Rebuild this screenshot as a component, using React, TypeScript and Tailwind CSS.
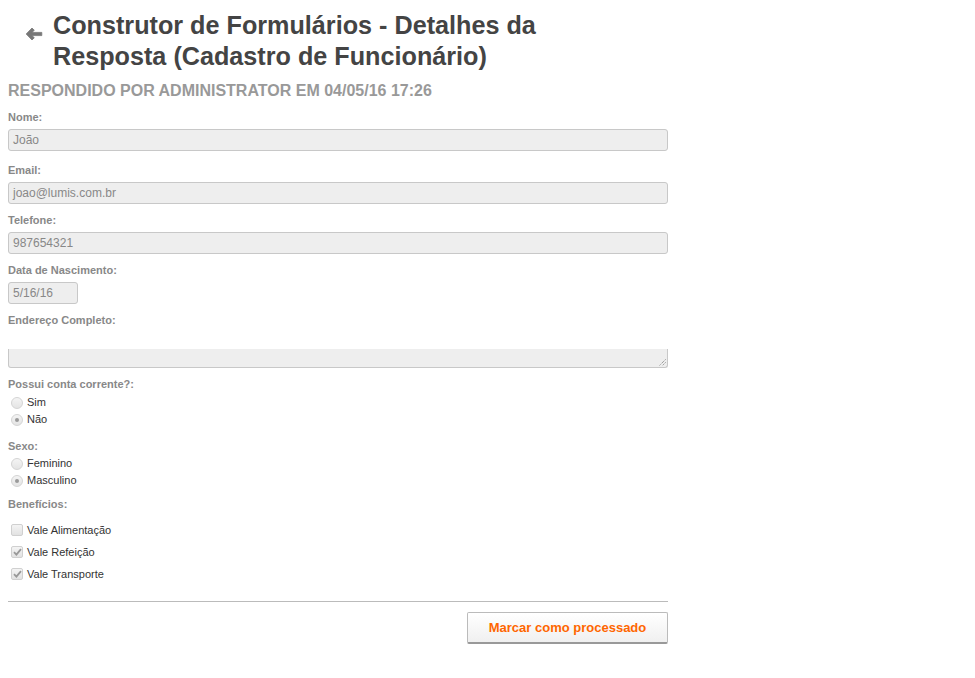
const font = { fontFamily: '"Liberation Sans", Arial, sans-serif' };

const Field = ({ label, value, className, inputClass }: { label: string; value: string; className: string; inputClass?: string }) => (
  <div className={className}>
    <div className="text-[11px] leading-[14px] font-bold text-[#888]">{label}</div>
    <div
      className={`mt-[5px] h-[22px] rounded-[3px] border border-[#c8c8c8] bg-[#eeeeee] pl-1 text-[12px] leading-[20px] text-[#888] ${inputClass ?? "w-full"}`}
    >
      {value}
    </div>
  </div>
);

const Radio = ({ label, checked }: { label: string; checked?: boolean }) => (
  <div className="flex h-[17px] items-center pl-[3px]">
    <span className="flex h-[12px] w-[12px] items-center justify-center rounded-full border border-[#d4d4d4] bg-gradient-to-b from-[#f4f4f4] to-[#e4e4e4]">
      {checked && <span className="h-[4px] w-[4px] rounded-full bg-[#9a9a9a]" />}
    </span>
    <span className="ml-[4px] text-[11px] text-[#333]">{label}</span>
  </div>
);

const Check = ({ label, checked }: { label: string; checked?: boolean }) => (
  <div className="flex h-[22px] items-center pl-[3px]">
    <span className="flex h-[12px] w-[12px] items-center justify-center rounded-[2px] border border-[#d0d0d0] bg-gradient-to-b from-[#f4f4f4] to-[#e2e2e2]">
      {checked && (
        <svg width="9" height="8" viewBox="0 0 9 8">
          <path d="M1 4.2 L3.4 6.6 L8 1.2" fill="none" stroke="#999" strokeWidth="1.8" />
        </svg>
      )}
    </span>
    <span className="ml-[4px] text-[11px] text-[#333]">{label}</span>
  </div>
);

export default function App() {
  return (
    <div className="min-h-[678px] w-[975px] bg-white" style={font}>
      {/* Header */}
      <div className="flex pt-[10px]">
        <div className="w-[53px] pl-[25px] pt-[17px]">
          <svg width="18" height="14" viewBox="0 0 18 14">
            <path
              d="M7 1 L1.2 7 L7 13 L9.3 10.7 L7 8.6 H16.8 V5.4 H7 L9.3 3.3 Z"
              fill="#777"
              stroke="#777"
              strokeWidth="0.8"
              strokeLinejoin="round"
            />
          </svg>
        </div>
        <h1 className="w-[560px] text-[25.2px] leading-[31px] font-bold text-[#444]">
          Construtor de Formulários - Detalhes da Resposta (Cadastro de Funcionário)
        </h1>
      </div>

      <div className="w-[668px] pl-2">
        <div className="mt-[9px] text-[16px] leading-[20px] font-bold text-[#999]">
          RESPONDIDO POR ADMINISTRATOR EM 04/05/16 17:26
        </div>

        <Field className="mt-[9px]" label="Nome:" value="João" />
        <Field className="mt-[12px]" label="Email:" value="joao@lumis.com.br" />
        <Field className="mt-[9px]" label="Telefone:" value="987654321" />
        <Field className="mt-[9px]" label="Data de Nascimento:" value="5/16/16" inputClass="w-[70px]" />

        <div className="mt-[9px]">
          <div className="text-[11px] leading-[14px] font-bold text-[#888]">Endereço Completo:</div>
          <div className="relative mt-[22px] h-[19px] rounded-b-[3px] border-x border-b border-[#c8c8c8] bg-[#eeeeee]">
            <svg className="absolute right-[1px] bottom-[1px]" width="8" height="8" viewBox="0 0 8 8">
              <path d="M7.5 1.5 L1.5 7.5 M7.5 4.5 L4.5 7.5" stroke="#777" strokeWidth="1" strokeDasharray="1 1" />
            </svg>
          </div>
        </div>

        <div className="mt-[9px]">
          <div className="text-[11px] leading-[14px] font-bold text-[#888]">Possui conta corrente?:</div>
          <div className="mt-[3px]">
            <Radio label="Sim" />
            <Radio label="Não" checked />
          </div>
        </div>

        <div className="mt-[11px]">
          <div className="text-[11px] leading-[14px] font-bold text-[#888]">Sexo:</div>
          <div className="mt-[2px]">
            <Radio label="Feminino" />
            <Radio label="Masculino" checked />
          </div>
        </div>

        <div className="mt-[8px]">
          <div className="text-[11px] leading-[14px] font-bold text-[#888]">Benefícios:</div>
          <div className="mt-[8px]">
            <Check label="Vale Alimentação" />
            <Check label="Vale Refeição" checked />
            <Check label="Vale Transporte" checked />
          </div>
        </div>

        <div className="mt-[16px] border-t border-[#bbb]" />

        <div className="mt-[10px] flex justify-end">
          <button className="h-[32px] w-[201px] rounded-[2px] border border-[#bbb] border-b-[#999] border-b-2 bg-gradient-to-b from-white to-[#f0f0f0] text-[13px] font-bold text-[#ff6600]">
            Marcar como processado
          </button>
        </div>
      </div>
    </div>
  );
}
